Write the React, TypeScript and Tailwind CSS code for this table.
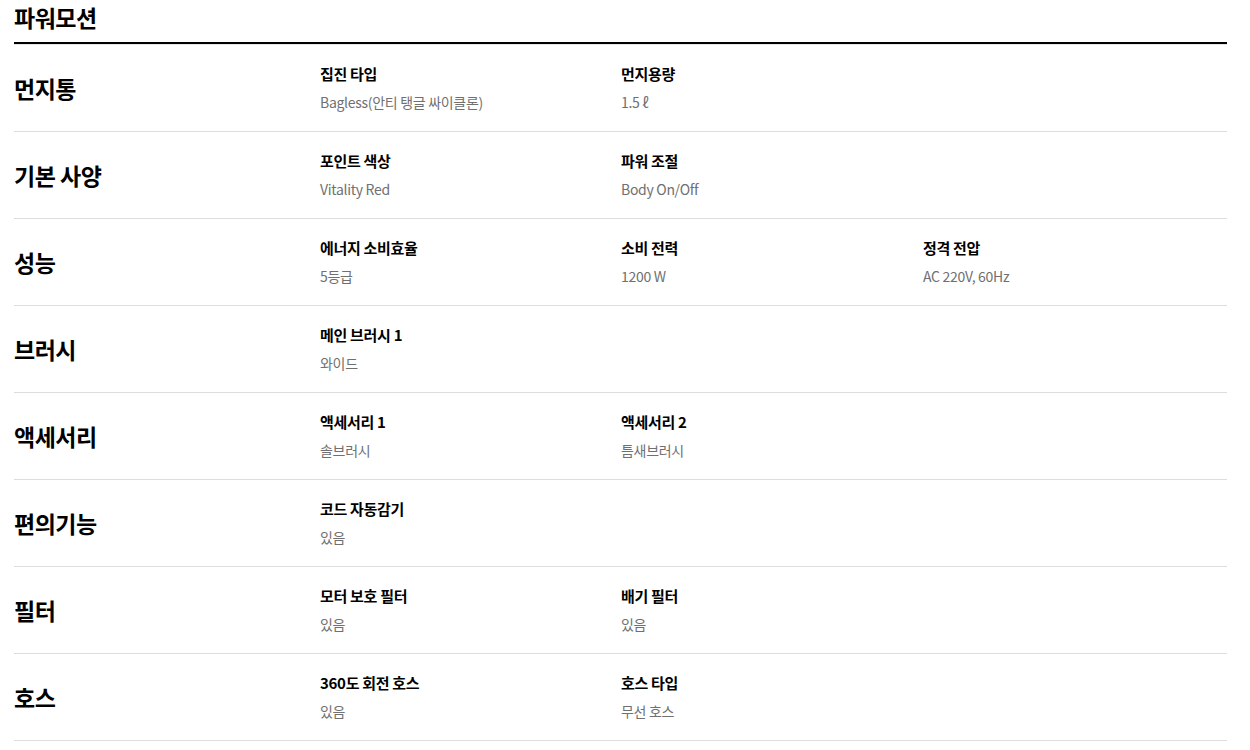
const specs = [
  {
    label: '먼지통',
    items: [
      { title: '집진 타입', value: 'Bagless(안티 탱글 싸이클론)' },
      { title: '먼지용량', value: '1.5 ℓ' },
    ],
  },
  {
    label: '기본 사양',
    items: [
      { title: '포인트 색상', value: 'Vitality Red' },
      { title: '파워 조절', value: 'Body On/Off' },
    ],
  },
  {
    label: '성능',
    items: [
      { title: '에너지 소비효율', value: '5등급' },
      { title: '소비 전력', value: '1200 W' },
      { title: '정격 전압', value: 'AC 220V, 60Hz' },
    ],
  },
  {
    label: '브러시',
    items: [{ title: '메인 브러시 1', value: '와이드' }],
  },
  {
    label: '액세서리',
    items: [
      { title: '액세서리 1', value: '솔브러시' },
      { title: '액세서리 2', value: '틈새브러시' },
    ],
  },
  {
    label: '편의기능',
    items: [{ title: '코드 자동감기', value: '있음' }],
  },
  {
    label: '필터',
    items: [
      { title: '모터 보호 필터', value: '있음' },
      { title: '배기 필터', value: '있음' },
    ],
  },
  {
    label: '호스',
    items: [
      { title: '360도 회전 호스', value: '있음' },
      { title: '호스 타입', value: '무선 호스' },
    ],
  },
];

export default function App() {
  return (
    <div
      className="min-h-screen bg-white pl-[14px] pr-[23px] text-black"
      style={{ fontFamily: '"Noto Sans CJK KR", "Noto Sans", sans-serif' }}
    >
      <div className="flex h-[44px] items-start border-b-2 border-black">
        <h1 className="mt-[2px] text-[23px] font-bold leading-[30px] tracking-[-0.5px]">파워모션</h1>
      </div>
      <div className="h-px bg-[#e5e5e5]" />

      {specs.map((row) => (
        <div
          key={row.label}
          className="grid grid-cols-[306px_301px_302px_1fr] border-b border-[#dddddd]"
        >
          <div className="flex items-center">
            <h2 className="text-[23px] font-bold leading-[30px] tracking-[-0.5px]">{row.label}</h2>
          </div>
          {row.items.map((item) => (
            <div key={item.title} className="pb-[18px] pt-[18px]">
              <div className="text-[15px] font-bold leading-[22px] tracking-[-0.3px]">{item.title}</div>
              <div className="mt-[6px] text-[14px] leading-[22px] tracking-[-0.3px] text-[#707070]">
                {item.value}
              </div>
            </div>
          ))}
        </div>
      ))}
    </div>
  );
}
